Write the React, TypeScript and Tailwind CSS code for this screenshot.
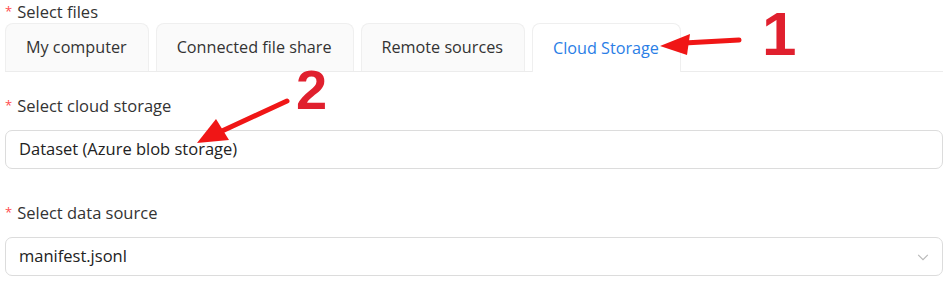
import React from "react";

const tabs = ["My computer", "Connected file share", "Remote sources", "Cloud Storage"];

function Label({ text }: { text: string }) {
  return (
    <div className="flex items-center h-5 leading-5 text-[16.5px] text-[#333]">
      <span className="text-[#ff4d4f] text-[13px] mr-[5px] leading-none -mt-[2px]">*</span>
      <span>{text}</span>
    </div>
  );
}

export default function App() {
  return (
    <div className="relative w-[947px] h-[283px] bg-white overflow-hidden pl-[5px] pr-[4px] font-['Open_Sans',sans-serif]">
      <div className="pt-[2px]">
        <Label text="Select files" />
      </div>

      {/* tab strip */}
      <div className="mt-[2px] flex gap-[7px] border-b border-[#ececec] h-[48px] items-end">
        {tabs.map((t, i) => {
          const active = i === tabs.length - 1;
          return (
            <div
              key={t}
              className={
                active
                  ? "h-[49px] -mb-px pl-[20px] pr-[21px] flex items-center rounded-t-[8px] border border-b-0 border-[#efefef] bg-white text-[#2a7ee6] text-[16.2px]"
                  : "h-[48px] pl-[20px] pr-[21px] flex items-center rounded-t-[8px] border border-b-0 border-[#efefef] bg-[#fafafa] text-[#333] text-[16.2px]"
              }
            >
              {t}
            </div>
          );
        })}
      </div>

      <div className="mt-[24px]">
        <Label text="Select cloud storage" />
      </div>
      <div className="mt-[14px] h-[39px] rounded-[7px] border border-[#dcdcdc] flex items-center px-[13px] text-[16.5px] text-[#222]">
        Dataset (Azure blob storage)
      </div>

      <div className="mt-[34px]">
        <Label text="Select data source" />
      </div>
      <div className="mt-[14px] h-[39px] rounded-[7px] border border-[#dcdcdc] flex items-center justify-between pl-[13px] pr-[12px] text-[16.5px] text-[#222]">
        <span>manifest.jsonl</span>
        <svg width="14" height="14" viewBox="0 0 16 16" fill="none" stroke="#b8b8b8" strokeWidth="1.3">
          <path d="M2.5 5.5 L8 11 L13.5 5.5" />
        </svg>
      </div>

      {/* annotations */}
      <svg className="absolute left-0 top-0 pointer-events-none" width="947" height="283">
        <path d="M739 40 L684 43" stroke="#f01616" strokeWidth="5" strokeLinecap="round" />
        <polygon points="660,46 690,34 687,55" fill="#f01616" />
        <path d="M287 101 L222 131" stroke="#f01616" strokeWidth="5" strokeLinecap="round" />
        <polygon points="197,143 216,119 229,140" fill="#f01616" />
      </svg>
      <div className="absolute left-[762px] top-[3px] text-[62px] font-bold text-[#e0202e] leading-none font-['Liberation_Sans',Arial,sans-serif]">
        1
      </div>
      <div className="absolute left-[296px] top-[62px] text-[56px] font-bold text-[#e0202e] leading-none font-['Liberation_Sans',Arial,sans-serif]">
        2
      </div>
    </div>
  );
}
